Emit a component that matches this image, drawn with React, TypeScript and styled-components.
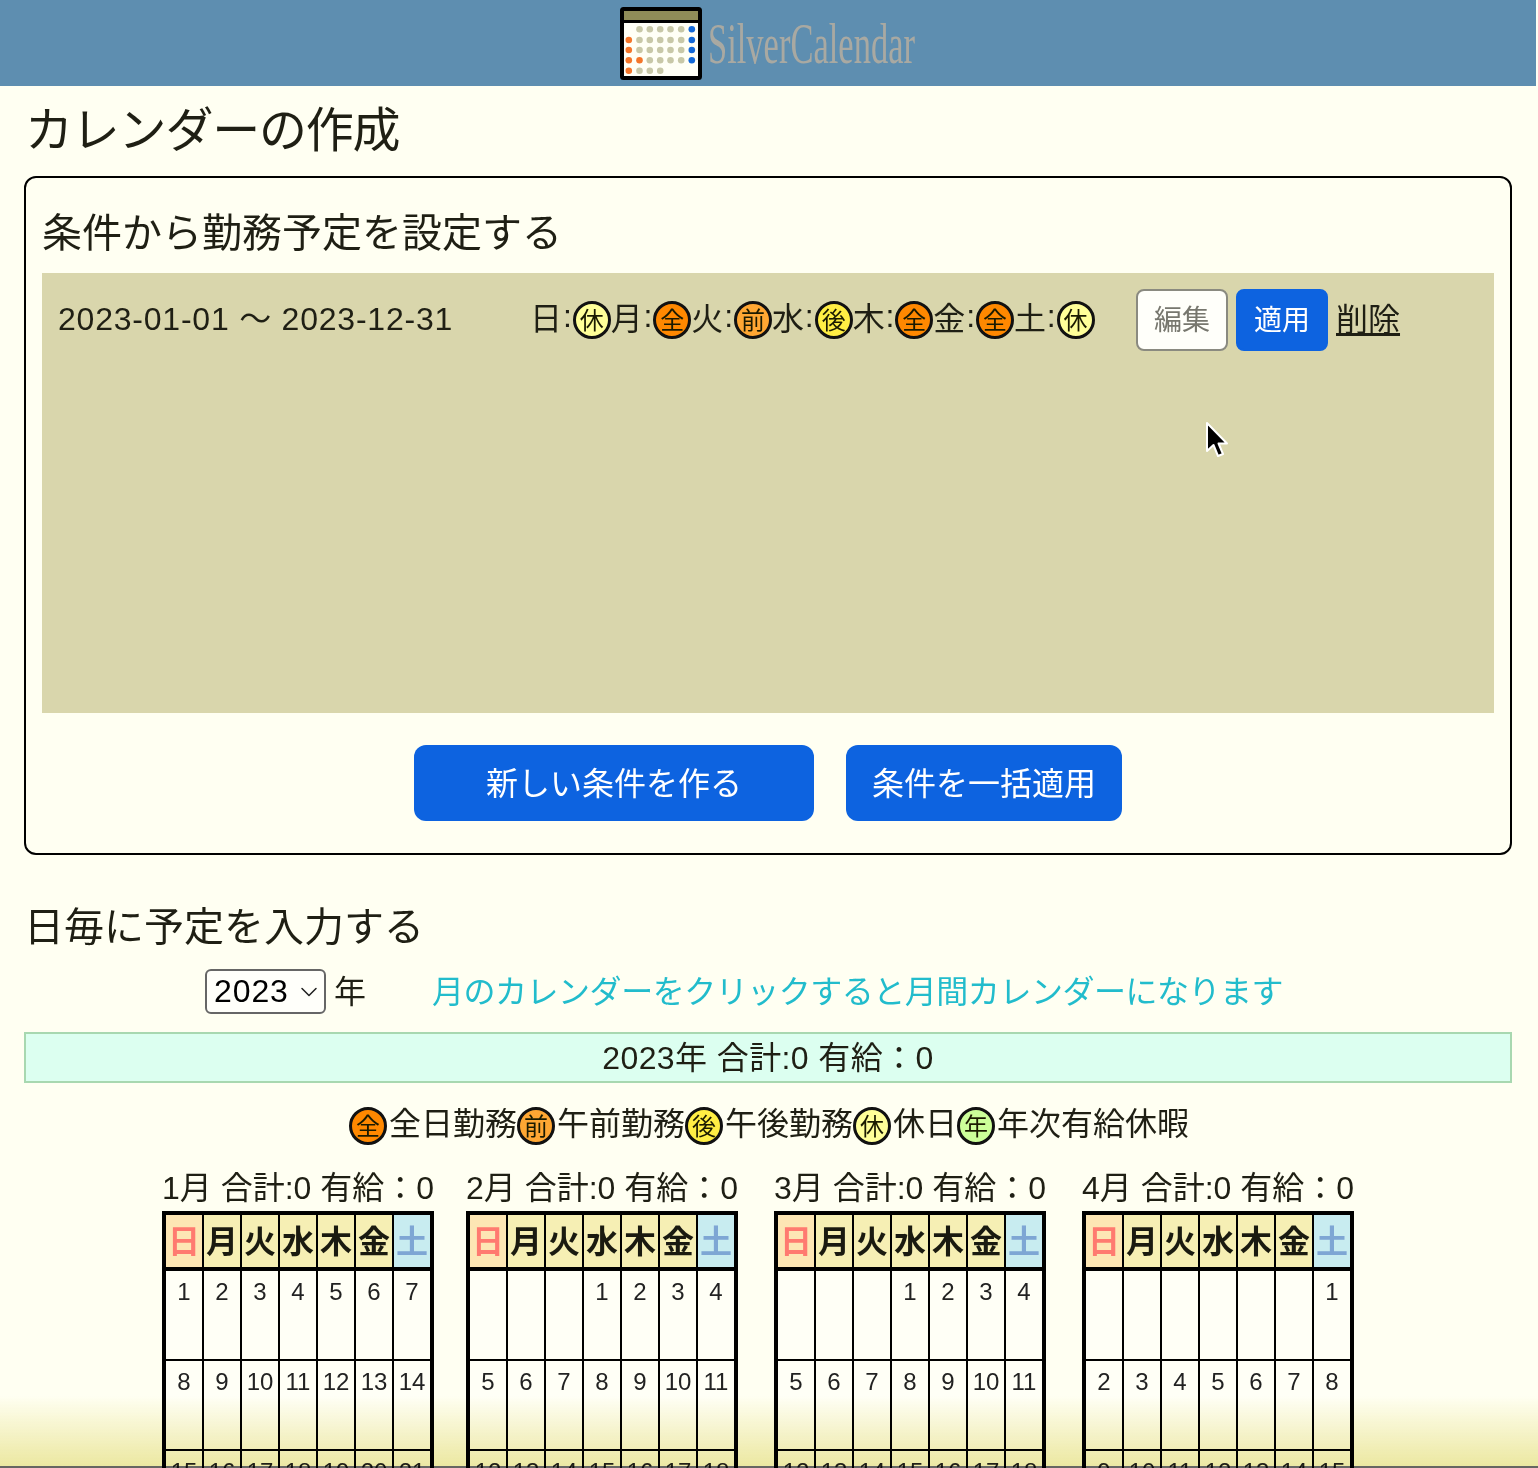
import React from "react";
import styled, { createGlobalStyle } from "styled-components";
import { ChevronDown } from "lucide-react";

const Global = createGlobalStyle`
  html, body { margin: 0; padding: 0; background: #fffff2; }
  body { font-family: "Liberation Sans", "Noto Sans CJK JP", sans-serif; color: #1f1f14; font-size: 32px; }
`;

const Page = styled.div`
  position: relative;
  width: 1538px;
  height: 1468px;
  overflow: hidden;
  background: #fffff2;
`;
const Inner = styled.div`
  width: 1536px;
`;
const Header = styled.header`
  height: 86px;
  background: #5e8eb0;
  display: flex;
  justify-content: center;
  align-items: flex-start;
  padding-top: 7px;
  box-sizing: border-box;
`;
const LogoMark = styled.svg`
  width: 82px;
  height: 73px;
  display: block;
`;
const LogoTextBox = styled.div`
  width: 214px;
  height: 73px;
  padding-left: 6px;
  box-sizing: border-box;
  overflow: visible;
`;
const LogoText = styled.span`
  display: inline-block;
  font-family: "Liberation Serif", serif;
  font-size: 58px;
  line-height: 73px;
  color: #a9a9a2;
  transform: scaleX(0.595);
  transform-origin: left center;
  white-space: nowrap;
`;
const Title = styled.h1`
  margin: 0;
  padding-left: 25px;
  height: 90px;
  line-height: 90px;
  font-size: 48px;
  font-weight: 400;
  letter-spacing: -1.2px;
`;
const Card = styled.section`
  margin: 0 24px;
  border: 2px solid #000;
  border-radius: 12px;
  padding: 30px 16px 32px;
  height: 679px;
  box-sizing: border-box;
`;
const SectionTitle = styled.h2`
  margin: 0;
  height: 65px;
  line-height: 50px;
  font-size: 40px;
  font-weight: 400;
`;
const RulePanel = styled.div`
  height: 440px;
  background: #d9d6ac;
  padding: 16px;
  box-sizing: border-box;
`;
const RuleRow = styled.div`
  display: flex;
  align-items: center;
  height: 62px;
`;
const DateRange = styled.span`
  width: 472px;
  flex: none;
  letter-spacing: 0.78px;
  margin-top: -8px;
`;
const DayList = styled.div`
  display: flex;
  width: 606px;
  flex: none;
`;
const DayItem = styled.span`
  width: 80.67px;
  flex: none;
  display: flex;
  align-items: center;
  white-space: nowrap;
`;
const DayLabel = styled.span`
  margin-top: -8px;
`;
const Colon = styled.span`
  width: 10.67px;
  text-align: center;
  margin-top: -8px;
`;
const badgeColors: Record<string, string> = {
  全: "#ff8800",
  前: "#ffa733",
  後: "#ffee44",
  休: "#ffff99",
  年: "#ccff99",
};
const Badge = styled.span<{ $kind: string }>`
  width: 38px;
  height: 38px;
  flex: none;
  box-sizing: border-box;
  display: inline-flex;
  align-items: center;
  justify-content: center;
  padding-top: 2px;
  border: 3px solid #111;
  border-radius: 50%;
  font-size: 24px;
  line-height: 1;
  color: #1a1a00;
  background: ${(p) => badgeColors[p.$kind]};
`;
const SmallButton = styled.button<{ $primary?: boolean }>`
  width: 92px;
  height: 62px;
  flex: none;
  box-sizing: border-box;
  margin-right: 8px;
  padding: 0 0 4px;
  border-radius: 8px;
  font-family: inherit;
  font-size: 28px;
  border: 2px solid ${(p) => (p.$primary ? "#0d63e0" : "#8a8a80")};
  background: ${(p) => (p.$primary ? "#0d63e0" : "#fffffa")};
  color: ${(p) => (p.$primary ? "#fff" : "#77776e")};
`;
const DeleteLink = styled.a`
  color: #1f1f14;
  text-decoration: underline;
  margin-top: -6px;
`;
const ActionRow = styled.div`
  display: flex;
  justify-content: center;
  gap: 32px;
  margin-top: 32px;
`;
const BigButton = styled.button<{ $w: number }>`
  width: ${(p) => p.$w}px;
  height: 76px;
  border: none;
  border-radius: 12px;
  background: #0d63e0;
  color: #fff;
  font-family: inherit;
  font-size: 32px;
  padding: 0 0 4px;
`;
const DailyTitle = styled.h2`
  margin: 47px 0 17px 24px;
  height: 50px;
  line-height: 50px;
  font-size: 40px;
  font-weight: 400;
`;
const YearRow = styled.div`
  display: flex;
  align-items: center;
  height: 45px;
  padding-left: 205px;
`;
const SelectWrap = styled.div`
  position: relative;
  width: 121px;
  height: 45px;
  box-sizing: border-box;
  border: 2px solid #666;
  border-radius: 6px;
  background: #fffffa;
`;
const YearSelect = styled.select`
  appearance: none;
  border: none;
  background: transparent;
  width: 100%;
  height: 100%;
  padding: 0 0 2px 7px;
  font-family: inherit;
  font-size: 32px;
  letter-spacing: 0.9px;
  color: #000;
  outline: none;
`;
const SelectArrow = styled(ChevronDown)`
  position: absolute;
  right: 1px;
  top: 7px;
  width: 28px;
  height: 28px;
  color: #222;
  pointer-events: none;
`;
const YearUnit = styled.span`
  margin-left: 8px;
  margin-top: -6px;
`;
const Hint = styled.span`
  margin-left: 66px;
  color: #22bccc;
  margin-top: -6px;
  letter-spacing: -0.48px;
`;
const SummaryBar = styled.div`
  margin: 18px 24px 0;
  height: 51px;
  box-sizing: border-box;
  border: 2px solid #a8d8b0;
  background: #dcfff0;
  display: flex;
  align-items: center;
  justify-content: center;
  padding-bottom: 6px;
  letter-spacing: 0.4px;
`;
const Legend = styled.div`
  margin-top: 20px;
  height: 40px;
  display: flex;
  align-items: center;
  justify-content: center;
  padding-left: 2px;
`;
const LegendBadge = styled(Badge)`
  margin: 6px 2px 0 0;
`;
const LegendText = styled.span`
  margin-top: -4px;
`;
const MonthGrid = styled.div`
  margin: 24px 0 0 162px;
  display: grid;
  grid-template-columns: 304px 308px 308px 308px;
  align-items: start;
`;
const MonthLabel = styled.div`
  height: 44px;
  line-height: 42px;
  white-space: nowrap;
`;
const Frame = styled.div`
  width: 272px;
  box-sizing: border-box;
  border: 4px solid #000;
  background: #000;
  display: flex;
  flex-direction: column;
  gap: 2px;
`;
const HeadRow = styled.div`
  display: grid;
  grid-template-columns: repeat(7, 36px);
  gap: 2px;
  margin-bottom: 2px;
`;
const headTones = {
  sun: { bg: "#fde6b4", fg: "#ff7a70" },
  sat: { bg: "#c8ecf0", fg: "#7ea6d4" },
  day: { bg: "#f6efb4", fg: "#1a1a10" },
};
const HeadCell = styled.div<{ $tone: keyof typeof headTones }>`
  height: 52px;
  padding-bottom: 4px;
  box-sizing: border-box;
  display: flex;
  align-items: center;
  justify-content: center;
  font-size: 32px;
  font-weight: 700;
  white-space: nowrap;
  background: ${(p) => headTones[p.$tone].bg};
  color: ${(p) => headTones[p.$tone].fg};
`;
const WeekRow = styled.div`
  display: grid;
  grid-template-columns: repeat(7, 36px);
  gap: 2px;
`;
const DayCell = styled.div`
  height: 88px;
  background: #fffff6;
  font-size: 24px;
  line-height: 42px;
  text-align: center;
  white-space: nowrap;
  color: #222;
`;
const BottomFade = styled.div`
  position: absolute;
  left: 0;
  right: 0;
  bottom: 0;
  height: 72px;
  box-sizing: border-box;
  border-bottom: 2px solid #666;
  background: linear-gradient(to bottom, rgba(236, 232, 170, 0), rgba(236, 232, 170, 1));
  mix-blend-mode: multiply;
  pointer-events: none;
`;
const Cursor = styled.svg`
  position: absolute;
  left: 1203px;
  top: 421px;
  width: 28px;
  height: 40px;
  pointer-events: none;
`;

const Logo = () => {
  const rows: [number, string[]][] = [
    [22.3, ["", "g", "g", "g", "g", "g", "b"]],
    [33, ["o", "g", "g", "g", "g", "g", "b"]],
    [43, ["o", "g", "g", "g", "g", "g", "b"]],
    [53.3, ["o", "o", "g", "g", "g", "g", "b"]],
    [63.7, ["o", "g", "g", "g", "", "", ""]],
  ];
  const xs = [8.8, 19.5, 29.8, 40.2, 50.5, 61.2, 71.8];
  const fill: Record<string, string> = { g: "#c8c8a8", b: "#1268d8", o: "#f4762a" };
  return (
    <LogoMark viewBox="0 0 82 73">
      <rect x="2" y="2" width="78" height="69" rx="1.5" fill="#fffff6" stroke="#000" strokeWidth="4" />
      <rect x="4" y="4" width="74" height="9" fill="#8f8c58" />
      <rect x="4" y="13" width="74" height="3" fill="#000" />
      {rows.map(([y, cols]) =>
        cols.map((c, i) => (c ? <circle key={`${y}-${i}`} cx={xs[i]} cy={y} r="3.3" fill={fill[c]} /> : null))
      )}
    </LogoMark>
  );
};

const rule: [string, string][] = [
  ["日", "休"],
  ["月", "全"],
  ["火", "前"],
  ["水", "後"],
  ["木", "全"],
  ["金", "全"],
  ["土", "休"],
];
const legend: [string, string][] = [
  ["全", "全日勤務"],
  ["前", "午前勤務"],
  ["後", "午後勤務"],
  ["休", "休日"],
  ["年", "年次有給休暇"],
];
const months = [
  { m: 1, start: 0, days: 31 },
  { m: 2, start: 3, days: 28 },
  { m: 3, start: 3, days: 31 },
  { m: 4, start: 6, days: 30 },
];
const heads = ["日", "月", "火", "水", "木", "金", "土"];

function weeksOf(start: number, days: number): (number | null)[][] {
  const cells: (number | null)[] = Array(start).fill(null);
  for (let d = 1; d <= days; d++) cells.push(d);
  while (cells.length % 7) cells.push(null);
  const out: (number | null)[][] = [];
  for (let i = 0; i < cells.length; i += 7) out.push(cells.slice(i, i + 7));
  return out;
}

export default function App() {
  return (
    <Page>
      <Global />
      <Inner>
        <Header>
          <Logo />
          <LogoTextBox>
            <LogoText>SilverCalendar</LogoText>
          </LogoTextBox>
        </Header>
        <Title>カレンダーの作成</Title>
        <Card>
          <SectionTitle>条件から勤務予定を設定する</SectionTitle>
          <RulePanel>
            <RuleRow>
              <DateRange>2023-01-01 〜 2023-12-31</DateRange>
              <DayList>
                {rule.map(([d, k], i) => (
                  <DayItem key={i}>
                    <DayLabel>{d}</DayLabel>
                    <Colon>:</Colon>
                    <Badge $kind={k}>{k}</Badge>
                  </DayItem>
                ))}
              </DayList>
              <SmallButton>編集</SmallButton>
              <SmallButton $primary>適用</SmallButton>
              <DeleteLink>削除</DeleteLink>
            </RuleRow>
          </RulePanel>
          <ActionRow>
            <BigButton $w={400}>新しい条件を作る</BigButton>
            <BigButton $w={276}>条件を一括適用</BigButton>
          </ActionRow>
        </Card>
        <DailyTitle>日毎に予定を入力する</DailyTitle>
        <YearRow>
          <SelectWrap>
            <YearSelect defaultValue="2023">
              <option>2023</option>
            </YearSelect>
            <SelectArrow strokeWidth={1.3} />
          </SelectWrap>
          <YearUnit>年</YearUnit>
          <Hint>月のカレンダーをクリックすると月間カレンダーになります</Hint>
        </YearRow>
        <SummaryBar>2023年 合計:0 有給：0</SummaryBar>
        <Legend>
          {legend.map(([k, t]) => (
            <React.Fragment key={k}>
              <LegendBadge $kind={k}>{k}</LegendBadge>
              <LegendText>{t}</LegendText>
            </React.Fragment>
          ))}
        </Legend>
        <MonthGrid>
          {months.map(({ m, start, days }) => (
            <div key={m}>
              <MonthLabel>{m}月 合計:0 有給：0</MonthLabel>
              <Frame>
                <HeadRow>
                  {heads.map((h, i) => (
                    <HeadCell key={h} $tone={i === 0 ? "sun" : i === 6 ? "sat" : "day"}>
                      {h}
                    </HeadCell>
                  ))}
                </HeadRow>
                {weeksOf(start, days).map((w, wi) => (
                  <WeekRow key={wi}>
                    {w.map((d, di) => (
                      <DayCell key={di}>{d ?? ""}</DayCell>
                    ))}
                  </WeekRow>
                ))}
              </Frame>
            </div>
          ))}
        </MonthGrid>
      </Inner>
      <BottomFade />
      <Cursor viewBox="0 0 28 40">
        <path
          d="M4 2 L4 30 L10.5 24 L15 35 L20 33 L15.5 22.5 L24 22.5 Z"
          fill="#000"
          stroke="#fff"
          strokeWidth="2"
          strokeLinejoin="round"
        />
      </Cursor>
    </Page>
  );
}
